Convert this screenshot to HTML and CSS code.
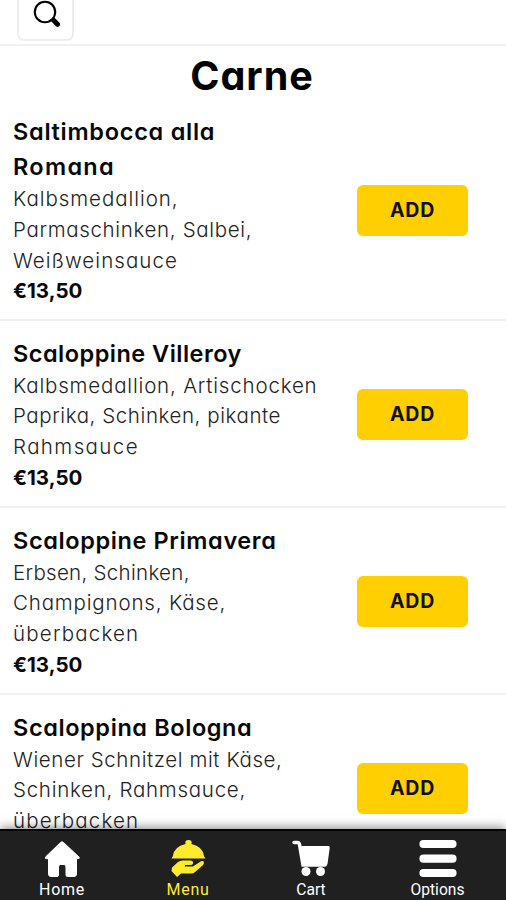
FILE: index.html
```html
<!DOCTYPE html>
<html lang="de">
<head>
<meta charset="utf-8">
<title>Carne</title>
<link rel="stylesheet" href="styles.css">
</head>
<body>
<div class="app">
  <header class="topbar">
    <button class="search" aria-label="Suche">
      <svg width="28" height="28" viewBox="0 0 28 28"><circle cx="12" cy="12" r="10.2" fill="none" stroke="#000" stroke-width="2.1"/><path d="M19 19l1.5 1.5" stroke="#000" stroke-width="2.5"/><path d="M20.800 20.500l3.700 3.700" stroke="#000" stroke-width="5" stroke-linecap="round"/></svg>
    </button>
  </header>
  <main class="menu">
    <h1 class="heading">Carne</h1>
    <section class="dish first">
      <div class="info">
        <h2 class="name"><span class="t1">Saltimbocca alla</span><br><span class="t2">Romana</span></h2>
        <p class="desc"><span class="d1">Kalbsmedallion,</span><br><span class="d2">Parmaschinken, Salbei,</span><br><span class="d3">Weißweinsauce</span></p>
        <p class="price">€13,50</p>
      </div>
      <button class="add">ADD</button>
    </section>
    <section class="dish">
      <div class="info">
        <h2 class="name"><span class="t3">Scaloppine Villeroy</span></h2>
        <p class="desc"><span class="d4">Kalbsmedallion, Artischocken</span><br><span class="d5">Paprika, Schinken, pikante</span><br><span class="d6">Rahmsauce</span></p>
        <p class="price">€13,50</p>
      </div>
      <button class="add">ADD</button>
    </section>
    <section class="dish">
      <div class="info">
        <h2 class="name"><span class="t4">Scaloppine Primavera</span></h2>
        <p class="desc"><span class="d7">Erbsen, Schinken,</span><br><span class="d8">Champignons, Käse,</span><br><span class="d9">überbacken</span></p>
        <p class="price">€13,50</p>
      </div>
      <button class="add">ADD</button>
    </section>
    <section class="dish">
      <div class="info">
        <h2 class="name"><span class="t5">Scaloppina Bologna</span></h2>
        <p class="desc"><span class="d10">Wiener Schnitzel mit Käse,</span><br><span class="d11">Schinken, Rahmsauce,</span><br><span class="d9">überbacken</span></p>
        <p class="price">€13,50</p>
      </div>
      <button class="add">ADD</button>
    </section>
  </main>
  <nav class="tabs">
    <a class="tab home"><svg width="40" height="40" viewBox="0 0 40 40"><path d="M18.500 3.500Q20 2 21.500 3.500L37 18Q38 19.700 36 19.700H34.500V35Q34.500 37.500 32 37.500H25.500Q24 37.500 24 36V28Q24 25.500 22 25.500H18.500Q16.500 25.500 16.500 28V36Q16.500 37.500 15 37.500H9Q6.500 37.500 6.500 35V19.700H4.500Q2.500 19.700 3.500 18Z" fill="currentColor" stroke="currentColor" stroke-width="1" stroke-linejoin="round"/></svg><span>Home</span></a>
    <a class="tab active"><svg width="40" height="40" viewBox="0 0 40 40"><path d="M4.800 17.200Q6 7.500 17.500 5Q16.500 1 20.500 1T23.500 5Q35 7.500 36 17.200L37.500 19.600H3.500Z" fill="currentColor"/><path d="M4 28.500L10 23Q12 21.500 15 21.500H23Q25.500 22 25 24.500Q24.500 26 22 26H17V27.500H25L33 22.300Q35.500 21.500 36 23.500Q36 25 34.500 26.500L27 33Q25.500 34.500 23 34.500H13L9 38L3.500 32Z" fill="currentColor"/></svg><span>Menu</span></a>
    <a class="tab cart"><svg width="40" height="40" viewBox="0 0 40 40"><path d="M3 3.500H6.500Q8 3.500 8.500 5.500L12 26H34" fill="none" stroke="currentColor" stroke-width="3.500" stroke-linecap="round"/><path d="M8.500 7H37.500Q39 7 38.700 9L36.500 25Q36 27 34 27H13Q11 27 10.700 25Z" fill="currentColor"/><circle cx="15" cy="32.500" r="4.500" fill="currentColor"/><circle cx="29.500" cy="32.500" r="4.500" fill="currentColor"/></svg><span>Cart</span></a>
    <a class="tab options"><svg width="40" height="40" viewBox="0 0 40 40"><path d="M5.500 5H34.500M5.500 19.700H34.500M5.500 34H34.500" fill="none" stroke="currentColor" stroke-width="8.200" stroke-linecap="round"/></svg><span>Options</span></a>
  </nav>
</div>
</body>
</html>
```
FILE: styles.css
```css
* { box-sizing: border-box; }
body { margin: 0; background: #fff; color: #080808; font-family: Inter, "Noto Sans", sans-serif; font-feature-settings: "cv11" 1; }
h1, h2, p { margin: 0; }
.app { height: 900px; display: flex; flex-direction: column; overflow: hidden; }
.topbar { height: 46px; flex: none; display: flex; align-items: flex-end; padding: 0 17px 3px; border-bottom: 2px solid #f1f1f1; overflow: hidden; }
.search { width: 57px; height: 56px; flex: none; padding: 2px 0 0 2px; display: flex; align-items: center; justify-content: center; background: #fff; border: 2px solid #ededed; border-radius: 7px; }
.menu { flex: 1; min-height: 0; overflow: hidden; }
.heading { height: 60px; line-height: 60px; text-align: center; font-size: 39.5px; font-weight: 750; letter-spacing: 1px; color: #000; padding-right: 2px; }
.dish { display: flex; align-items: center; justify-content: space-between; height: 187px; padding: 2px 38px 0 13px; border-bottom: 2px solid #f1f1f1; }
.first { height: 215px; padding-top: 0; padding-bottom: 4px; }
.info { white-space: nowrap; }
.name { font-size: 23.5px; line-height: 35px; font-weight: 580; }
.desc { font-size: 20.5px; line-height: 30.7px; font-weight: 300; color: #222; }
.price { font-size: 20.5px; line-height: 30.7px; font-weight: 650; }
/* tracking per line */
.t1 { letter-spacing: .72px; }
.t2 { letter-spacing: 1.3px; }
.t3 { letter-spacing: .48px; }
.t4 { letter-spacing: .62px; }
.t5 { letter-spacing: .6px; }
.d1 { letter-spacing: .95px; }
.d2 { letter-spacing: .66px; }
.d3 { letter-spacing: 1.05px; }
.d4 { letter-spacing: .82px; }
.d5 { letter-spacing: .58px; }
.d6 { letter-spacing: 1.4px; }
.d7 { letter-spacing: .3px; }
.d8 { letter-spacing: .83px; }
.d9 { letter-spacing: 1.2px; }
.d10 { letter-spacing: .6px; }
.d11 { letter-spacing: .73px; }
.add { width: 111px; height: 51px; border: 0; border-radius: 6px; background: #ffcf02; color: #111; font: 650 19.5px Inter, sans-serif; letter-spacing: .8px; padding: 0 0 1px; }
.tabs { height: 71px; flex: none; display: grid; grid-template-columns: 124px 128px 118px 135px; background: #202020; border-top: 2px solid #050505; box-shadow: 0 -1px 10px rgba(0,0,0,.5); position: relative; }
.tab { display: flex; flex-direction: column; align-items: center; color: #fff; padding-top: 8px; font: 15.6px/22px Roboto, sans-serif; }
.home span, .active span { font-size: 16px; letter-spacing: .7px; }
.active { color: #ffeb2e; }
```
